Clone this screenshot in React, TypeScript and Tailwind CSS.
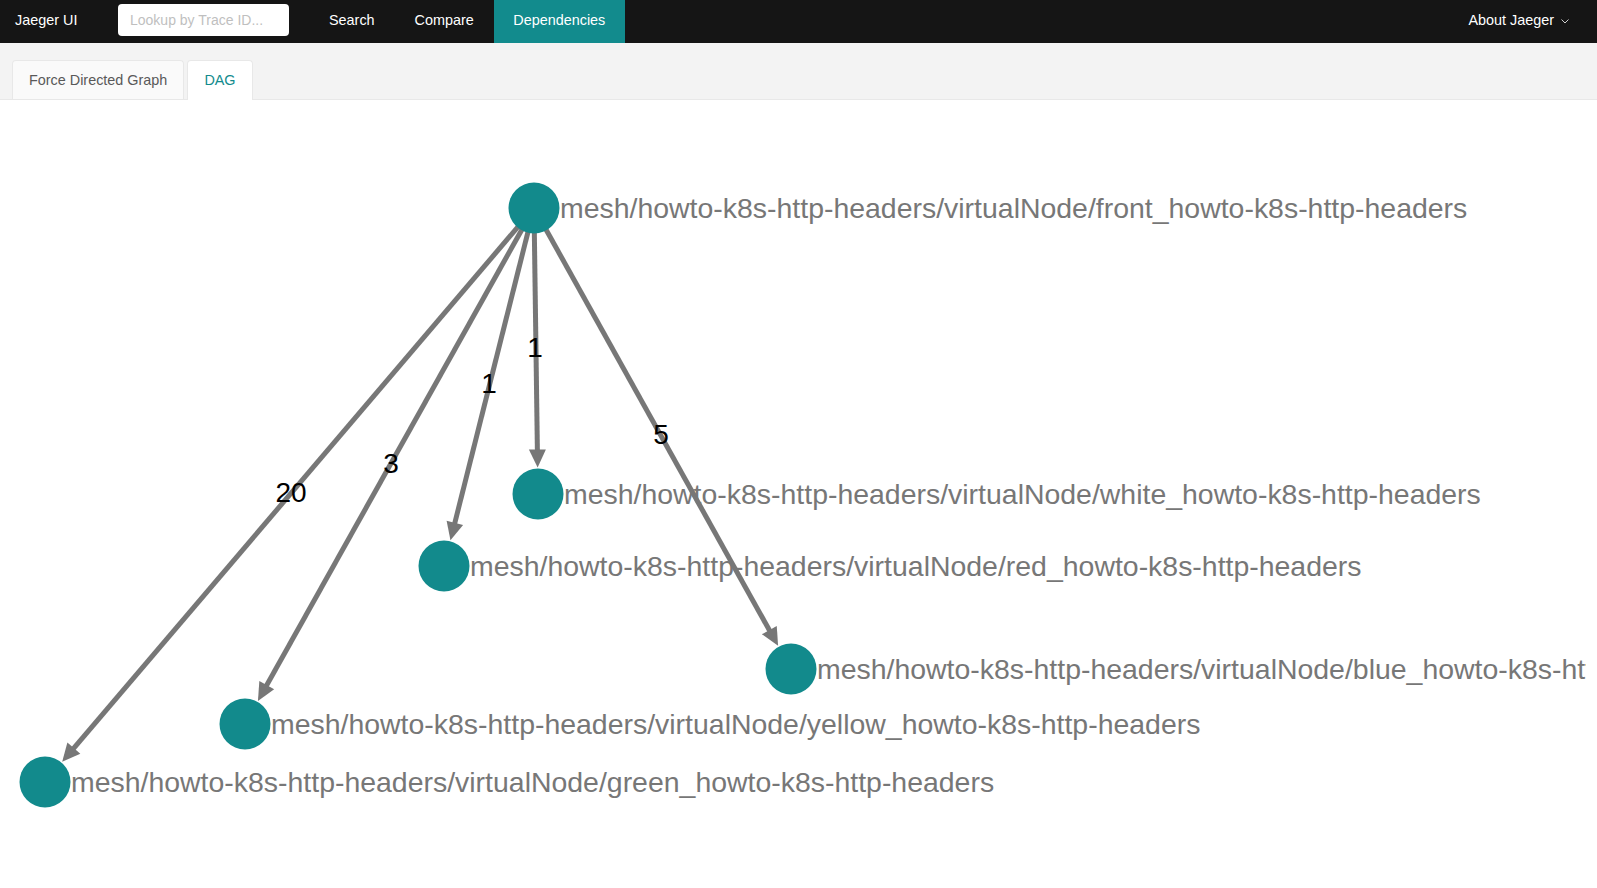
import React from "react";

type Node = { id: string; cx: number; cy: number; label: string };

const R = 25.5;
const nodes: Node[] = [
  { id: "front", cx: 534, cy: 208, label: "mesh/howto-k8s-http-headers/virtualNode/front_howto-k8s-http-headers" },
  { id: "white", cx: 538, cy: 494, label: "mesh/howto-k8s-http-headers/virtualNode/white_howto-k8s-http-headers" },
  { id: "red", cx: 444, cy: 566, label: "mesh/howto-k8s-http-headers/virtualNode/red_howto-k8s-http-headers" },
  { id: "blue", cx: 791, cy: 669, label: "mesh/howto-k8s-http-headers/virtualNode/blue_howto-k8s-http-headers" },
  { id: "yellow", cx: 245, cy: 724, label: "mesh/howto-k8s-http-headers/virtualNode/yellow_howto-k8s-http-headers" },
  { id: "green", cx: 45, cy: 782, label: "mesh/howto-k8s-http-headers/virtualNode/green_howto-k8s-http-headers" },
];

const labels = [
  { t: "20", x: 291, y: 502 },
  { t: "3", x: 391, y: 473 },
  { t: "1", x: 489, y: 393 },
  { t: "1", x: 535, y: 357 },
  { t: "5", x: 661, y: 444 },
];

function Edge({ from, to }: { from: Node; to: Node }) {
  const dx = to.cx - from.cx;
  const dy = to.cy - from.cy;
  const len = Math.hypot(dx, dy);
  const ux = dx / len;
  const uy = dy / len;
  const nx = -uy;
  const ny = ux;
  const sx = from.cx + ux * (R - 4);
  const sy = from.cy + uy * (R - 4);
  const tx = to.cx - ux * (R + 1);
  const ty = to.cy - uy * (R + 1);
  const ex = tx - ux * 15;
  const ey = ty - uy * 15;
  const bx = tx - ux * 18;
  const by = ty - uy * 18;
  const pts = `${tx},${ty} ${bx + nx * 8.5},${by + ny * 8.5} ${bx - nx * 8.5},${by - ny * 8.5}`;
  return (
    <g>
      <line x1={sx} y1={sy} x2={ex} y2={ey} stroke="#777777" strokeWidth={5} />
      <polygon points={pts} fill="#777777" />
    </g>
  );
}

export default function App() {
  const front = nodes[0];
  return (
    <div className="w-[1597px] h-[888px] bg-white overflow-hidden font-['Liberation_Sans',Arial,sans-serif]">
      {/* Top nav */}
      <div className="h-[43px] bg-[#151515] flex items-stretch text-[14.4px] text-white">
        <div className="flex items-center pl-[15px] pb-[2px] w-[118px]">Jaeger UI</div>
        <div className="flex items-center">
          <div className="w-[171px] h-[32px] bg-white rounded-[4px] flex items-center pl-[12px] text-[#bfbfbf] text-[14px] mb-[3px]">
            Lookup by Trace ID...
          </div>
        </div>
        <div className="flex items-stretch ml-[20px]">
          <div className="flex items-center px-[20px] pb-[2px]">Search</div>
          <div className="flex items-center px-[20px] pb-[2px]">Compare</div>
          <div className="flex items-center justify-center pb-[2px] bg-[#128b8d] w-[131px]">Dependencies</div>
        </div>
        <div className="flex-1" />
        <div className="flex items-center pr-[27px] pb-[2px] gap-[6px]">
          <span>About Jaeger</span>
          <svg width="10" height="10" viewBox="0 0 10 10">
            <polyline points="1.5,3.5 5,7 8.5,3.5" fill="none" stroke="#cfcfcf" strokeWidth="1" />
          </svg>
        </div>
      </div>

      {/* Tabs */}
      <div className="h-[57px] bg-[#f3f3f3] border-b border-[#e8e8e8] flex items-end pl-[12px] gap-[3px] text-[14.4px]">
        <div className="h-[39px] px-[16px] pt-[1px] flex items-center bg-[#fafafa] border border-b-0 border-[#e8e8e8] rounded-t-[4px] text-[#595959]">
          Force Directed Graph
        </div>
        <div className="h-[40px] px-[16px] flex items-center bg-white border border-b-0 border-[#e8e8e8] rounded-t-[4px] text-[#128b8d] -mb-px">
          DAG
        </div>
      </div>

      {/* Graph */}
      <svg width={1586} height={788} viewBox="0 100 1586 788" className="block">
        {nodes.slice(1).map((n) => (
          <Edge key={n.id} from={front} to={n} />
        ))}
        {labels.map((l, i) => (
          <text
            key={i}
            x={l.x}
            y={l.y}
            textAnchor="middle"
            fontSize={28}
            fill="#000"
            fontFamily="'Liberation Sans', Arial, sans-serif"
          >
            {l.t}
          </text>
        ))}
        {nodes.map((n) => (
          <g key={n.id}>
            <circle cx={n.cx} cy={n.cy} r={R} fill="#128a8c" />
            <text
              x={n.cx + R + 0.5}
              y={n.cy + 10}
              fontSize={28.45}
              fill="#777777"
              fontFamily="'Liberation Sans', Arial, sans-serif"
            >
              {n.label}
            </text>
          </g>
        ))}
      </svg>
    </div>
  );
}
